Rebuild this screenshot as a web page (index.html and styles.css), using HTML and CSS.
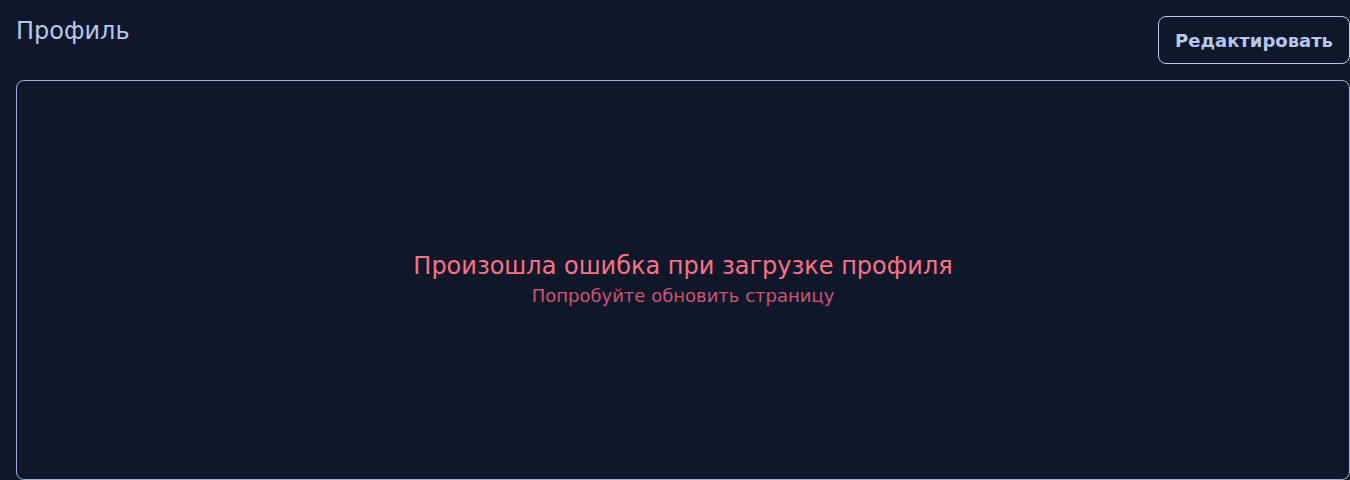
FILE: index.html
```html
<!DOCTYPE html>
<html lang="ru">
<head>
<meta charset="utf-8">
<title>Профиль</title>
<link rel="stylesheet" href="styles.css">
</head>
<body>
<div class="page">
  <header class="header">
    <h1 class="title">Профиль</h1>
    <button class="edit-btn" type="button">Редактировать</button>
  </header>
  <section class="card">
    <div class="error">
      <p class="error-title">Произошла ошибка при загрузке профиля</p>
      <p class="error-hint">Попробуйте обновить страницу</p>
    </div>
  </section>
</div>
</body>
</html>
```
FILE: styles.css
```css
html, body {
  margin: 0;
  padding: 0;
  background: #0f172a;
  overflow: hidden;
}
body {
  font-family: "DejaVu Sans", sans-serif;
  color: #b7c6ec;
}
.page {
  padding: 16px 0 0 16px;
  width: 1334px;
}
.header {
  display: flex;
  justify-content: space-between;
  align-items: flex-start;
  margin-bottom: 16px;
}
.title {
  margin: 0;
  padding-top: 1px;
  font-size: 24px;
  font-weight: 400;
  line-height: 28px;
  color: #b7c6ec;
}
.edit-btn {
  font-family: "DejaVu Sans", sans-serif;
  font-size: 18px;
  font-weight: 700;
  color: #b7c6ec;
  background: transparent;
  border: 1px solid #b7c6ec;
  border-radius: 8px;
  height: 48px;
  padding: 0 16px;
}
.card {
  border: 1px solid #9fb0e0;
  border-radius: 8px;
  height: 400px;
  box-sizing: border-box;
  display: flex;
  align-items: center;
  justify-content: center;
}
.error {
  text-align: center;
}
.error-title {
  margin: 0;
  font-size: 24px;
  line-height: 32px;
  color: #fb7185;
}
.error-hint {
  margin: 0;
  font-size: 18px;
  line-height: 28px;
  color: #cf5373;
}
```
